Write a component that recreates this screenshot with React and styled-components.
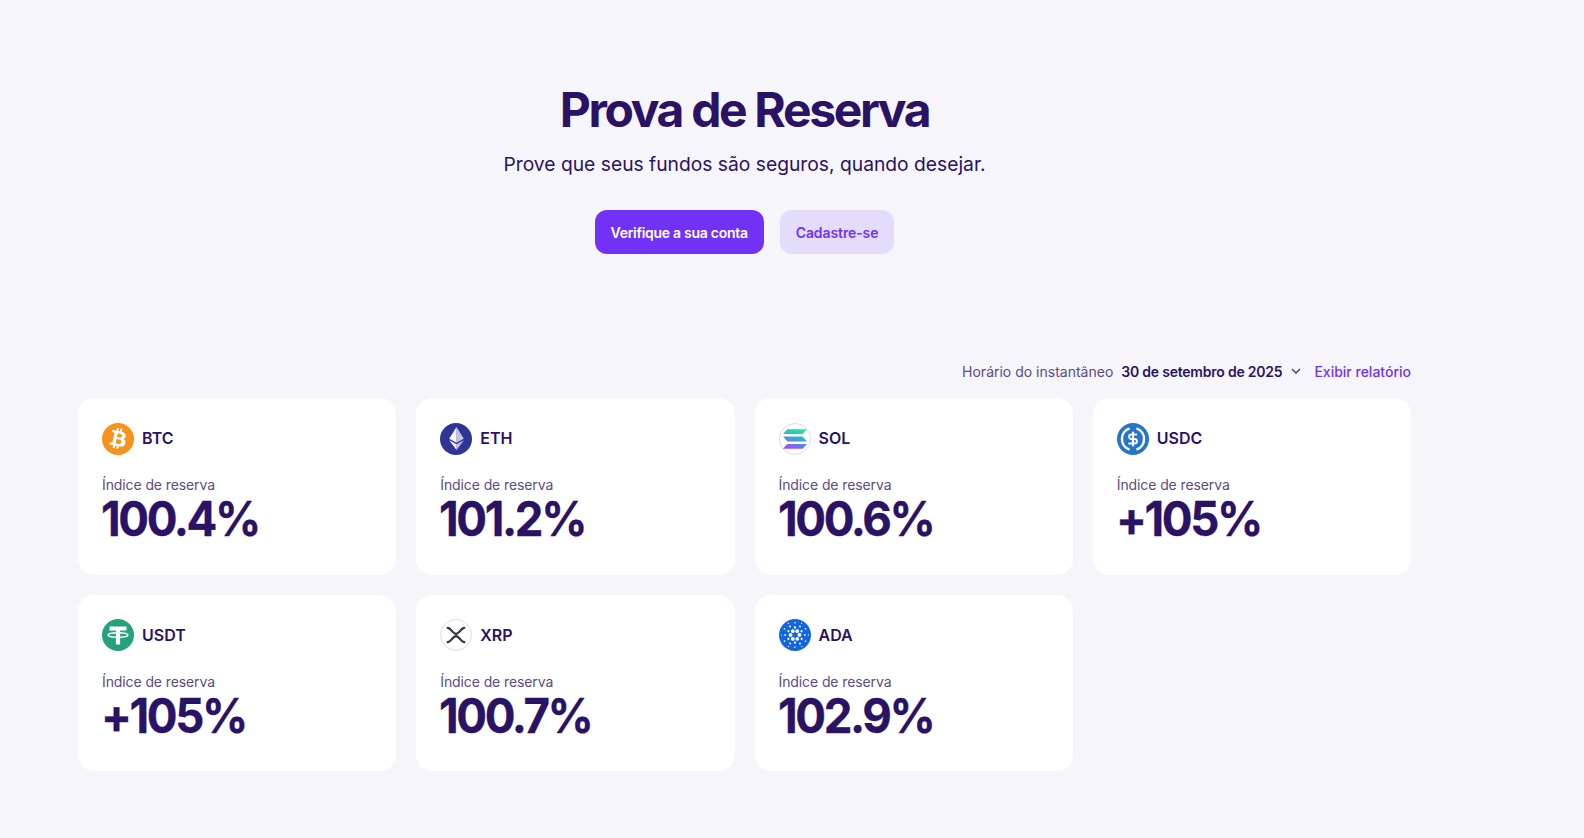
import React from 'react';
import styled, { createGlobalStyle } from 'styled-components';
import { FaBtc } from 'react-icons/fa';
import { SiCardano } from 'react-icons/si';

const GlobalStyle = createGlobalStyle`
    html, body {
        margin: 0;
        padding: 0;
        background: #f6f5fa;
        font-family: Inter, "Liberation Sans", sans-serif;
        color: #2a1265;
    }
`

const Page = styled('div')`
    width: 1333px;
    height: 838px;
    margin-left: 78px;
    overflow: hidden;
`

const Hero = styled('div')`
    display: flex;
    flex-direction: column;
    align-items: center;
    padding-top: 82px;
`

const Title = styled('h1')`
    margin: 0;
    font-size: 48px;
    line-height: 56px;
    font-weight: 700;
    letter-spacing: -2.35px;
`

const Subtitle = styled('p')`
    margin: 12px 0 0;
    font-size: 19.25px;
    line-height: 28px;
    font-weight: 400;
`

const Actions = styled('div')`
    display: flex;
    gap: 16px;
    margin-top: 32px;
`

const Button = styled('button')`
    height: 44px;
    padding: 0 16px;
    border: none;
    border-radius: 12px;
    font-family: inherit;
    font-size: 14px;
    font-weight: 600;
    letter-spacing: ${p => p.$primary ? '-0.28px' : '-0.1px'};
    color: ${p => p.$primary ? '#fff' : '#7132f5'};
    background: ${p => p.$primary ? '#7132f5' : '#e4dcfb'};
`

const SnapshotRow = styled('div')`
    display: flex;
    justify-content: flex-end;
    align-items: center;
    margin-top: 106px;
    height: 22px;
    font-size: 14px;
`

const SnapshotLabel = styled('span')`
    color: #5c4b85;
`

const SnapshotDate = styled('span')`
    display: flex;
    align-items: center;
    margin-left: 8px;
    font-weight: 600;
    letter-spacing: -0.22px;
    svg {
        margin-left: 8px;
    }
`

const ReportLink = styled('a')`
    margin-left: 12px;
    color: #7132f5;
    font-weight: 500;
`

const Grid = styled('div')`
    display: grid;
    grid-template-columns: repeat(4, 318.25px);
    grid-auto-rows: 176.5px;
    gap: 20px;
    margin-top: 16px;
`

const Card = styled('div')`
    background: #fff;
    border-radius: 16px;
    padding: 24.5px 24px;
    box-sizing: border-box;
`

const CoinRow = styled('div')`
    display: flex;
    align-items: center;
    gap: 8px;
    font-size: 16px;
    font-weight: 600;
    span + span {
        margin-top: -1px;
    }
`

const CoinIcon = styled('span')`
    display: flex;
    align-items: center;
    justify-content: center;
    width: 32px;
    height: 32px;
    border-radius: 50%;
    box-sizing: border-box;
    color: #fff;
    background: ${p => p.$bg || '#fff'};
    border: ${p => p.$outline ? '1px solid #dedce4' : 'none'};
`

const RatioLabel = styled('div')`
    margin-top: 20.5px;
    font-size: 14px;
    line-height: 20px;
    letter-spacing: -0.1px;
    color: #5c4b85;
`

const RatioValue = styled('div')`
    font-size: 48px;
    line-height: 48px;
    font-weight: 700;
    letter-spacing: -2.5px;
    margin-left: -1px;
    transform: scaleX(.95);
    transform-origin: left center;
    -webkit-text-stroke: 0.3px #2a1265;
`

const BtcIcon = () => (
    <CoinIcon $bg="#f7931a"><FaBtc size={21} style={{ transform: 'rotate(12deg)' }} /></CoinIcon>
)

const EthIcon = () => (
    <CoinIcon $bg="#2f3594">
        <svg width="15" height="23" viewBox="0 0 14 22">
            <path d="M7 0L0 11.2 7 15z" fill="#fff" opacity=".95" />
            <path d="M7 0l7 11.2L7 15z" fill="#fff" opacity=".7" />
            <path d="M0 12.6L7 22v-5.4z" fill="#fff" opacity=".95" />
            <path d="M14 12.6L7 22v-5.4z" fill="#fff" opacity=".7" />
        </svg>
    </CoinIcon>
)

const SolIcon = () => (
    <CoinIcon $outline>
        <svg width="24" height="20" viewBox="0 0 22 18">
            <defs>
                <linearGradient id="solGrad" x1="0.7" y1="0" x2="0.3" y2="1">
                    <stop offset="0" stopColor="#14f195" />
                    <stop offset=".5" stopColor="#3f9fd8" />
                    <stop offset="1" stopColor="#a04bff" />
                </linearGradient>
            </defs>
            <path fill="url(#solGrad)" d="M4 0h18l-4 4.4H0zM0 6.8h18l4 4.4H4zM4 13.6h18L18 18H0z" />
        </svg>
    </CoinIcon>
)

const UsdcIcon = () => (
    <CoinIcon $bg="#2775ca">
        <svg width="32" height="32" viewBox="0 0 32 32" fill="none" stroke="#fff">
            <path strokeWidth="2.4" d="M12.5 5.4a11.2 11.2 0 0 0 0 21.2M19.5 5.4a11.2 11.2 0 0 1 0 21.2" />
            <path strokeWidth="3" strokeLinecap="round" strokeLinejoin="round" transform="translate(8.2 8.2) scale(.65)" d="M12 2v20M17 5H9.5a3.5 3.5 0 0 0 0 7h5a3.5 3.5 0 0 1 0 7H6" />
        </svg>
    </CoinIcon>
)

const UsdtIcon = () => (
    <CoinIcon $bg="#26a17b">
        <svg width="32" height="32" viewBox="0 0 32 32" fill="none">
            <path fill="#fff" d="M7.5 7.5h17v4h-6.400v3.200h-4.200v-3.200H7.500z" />
            <path fill="#fff" d="M13.900 13.500h4.200v12h-4.200z" />
            <ellipse cx="16" cy="16" rx="10" ry="2.300" stroke="#fff" strokeWidth="1.400" />
        </svg>
    </CoinIcon>
)

const XrpIcon = () => (
    <CoinIcon $outline>
        <svg width="20" height="18" viewBox="0 0 18 16" fill="none" stroke="#33363f" strokeWidth="2" strokeLinecap="round">
            <path d="M1.500 1.500c3 0 4.500 5.500 7.500 5.500s4.500-5.500 7.500-5.500" />
            <path d="M1.500 14.500c3 0 4.500-5.500 7.500-5.500s4.500 5.500 7.500 5.500" />
        </svg>
    </CoinIcon>
)

const AdaIcon = () => (
    <CoinIcon $bg="#1466e0"><SiCardano size={28} /></CoinIcon>
)

const coins = [
    { symbol: 'BTC', ratio: '100.4%', Icon: BtcIcon },
    { symbol: 'ETH', ratio: '101.2%', Icon: EthIcon },
    { symbol: 'SOL', ratio: '100.6%', Icon: SolIcon },
    { symbol: 'USDC', ratio: '+105%', Icon: UsdcIcon },
    { symbol: 'USDT', ratio: '+105%', Icon: UsdtIcon },
    { symbol: 'XRP', ratio: '100.7%', Icon: XrpIcon },
    { symbol: 'ADA', ratio: '102.9%', Icon: AdaIcon },
]

const App = () => {
    return(
        <Page>
            <GlobalStyle />
            <Hero>
                <Title>Prova de Reserva</Title>
                <Subtitle>Prove que seus fundos são seguros, quando desejar.</Subtitle>
                <Actions>
                    <Button $primary>Verifique a sua conta</Button>
                    <Button>Cadastre-se</Button>
                </Actions>
            </Hero>
            <SnapshotRow>
                <SnapshotLabel>Horário do instantâneo</SnapshotLabel>
                <SnapshotDate>
                    30 de setembro de 2025
                    <svg width="12" height="12" viewBox="0 0 12 12" fill="none" stroke="#5c4b85" strokeWidth="1.6"><path d="M2 4l4 4 4-4" /></svg>
                </SnapshotDate>
                <ReportLink>Exibir relatório</ReportLink>
            </SnapshotRow>
            <Grid>
                {coins.map(({ symbol, ratio, Icon }) => (
                    <Card key={symbol}>
                        <CoinRow><Icon /><span>{symbol}</span></CoinRow>
                        <RatioLabel>Índice de reserva</RatioLabel>
                        <RatioValue>{ratio}</RatioValue>
                    </Card>
                ))}
            </Grid>
        </Page>
    )
}

export default App
